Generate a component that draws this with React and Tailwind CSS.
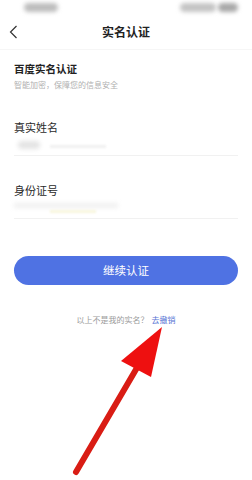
export default function App() {
  return (
    <div
      className="relative w-[252px] h-[480px] overflow-hidden bg-white text-[#222]"
      style={{ fontFamily: '"Noto Sans CJK SC", "Noto Sans", sans-serif' }}
    >
      {/* status bar (blurred) */}
      <div className="flex h-[14px] items-center justify-between pl-[24px] pr-[14px]">
        <div className="h-[9px] w-[34px] rounded-full bg-[#bdbdbd] blur-[2px]" />
        <div className="flex gap-[2px]">
          <div className="h-[9px] w-[36px] rounded-full bg-[#c4c4c4] blur-[2px]" />
          <div className="h-[9px] w-[20px] rounded-full bg-[#a8a8a8] blur-[2px]" />
        </div>
      </div>

      {/* nav */}
      <div className="relative flex h-[36px] items-center justify-center border-b border-[#f6f6f6]">
        <svg
          viewBox="0 0 10 14"
          className="absolute left-[9px] top-[11px] h-[14px] w-[10px]"
          fill="none"
          stroke="#333"
          strokeWidth="1.2"
        >
          <polyline points="7.5,1 1.5,7 7.5,13" />
        </svg>
        <span className="text-[12px] font-semibold leading-none">实名认证</span>
      </div>

      <div className="flex flex-col px-[14px]">
        <div className="mt-[12px] text-[10.5px] font-semibold leading-[14px]">百度实名认证</div>
        <div className="mt-[4px] text-[8px] leading-[10px] text-[#b0b0b0]">
          智能加密，保障您的信息安全
        </div>

        <div className="mt-[29px] text-[11px] leading-[16px] text-[#2a2a2a]">真实姓名</div>
        <div className="relative h-[21px] border-b border-[#f1f1f1]">
          <div className="absolute left-[4px] top-[6px] h-[8px] w-[22px] rounded bg-[#e4e4e4] blur-[2px]" />
          <div className="absolute left-[36px] top-[10px] h-[3px] w-[56px] bg-[#f0f0f0] blur-[1px]" />
        </div>

        <div className="mt-[26px] text-[11px] leading-[16px] text-[#2a2a2a]">身份证号</div>
        <div className="relative h-[21px] border-b border-[#f1f1f1]">
          <div className="absolute left-0 top-[5px] h-[5px] w-[104px] bg-[#f0f0f0] blur-[2px]" />
          <div className="absolute left-[36px] top-[12px] h-[3px] w-[46px] bg-[#f8f6de] blur-[1px]" />
        </div>

        <button className="mt-[37px] flex h-[29px] w-full items-center justify-center rounded-full bg-[#4f72e3] text-[11.5px] leading-none text-white">
          继续认证
        </button>

        <div className="mt-[29px] flex items-center justify-center text-[8px] leading-[12px]">
          <span className="text-[#9a9a9a]">以上不是我的实名？</span>
          <span className="ml-[3px] text-[#5674d4]">去撤销</span>
        </div>
      </div>

      {/* red arrow overlay */}
      <svg className="absolute left-0 top-0" width="252" height="480" viewBox="0 0 252 480">
        <line
          x1="76"
          y1="472"
          x2="138"
          y2="366"
          stroke="#d91c14"
          strokeWidth="6"
          strokeLinecap="round"
        />
        <polygon points="162,327 121,361 151,377" fill="#ee1010" />
      </svg>
    </div>
  );
}
